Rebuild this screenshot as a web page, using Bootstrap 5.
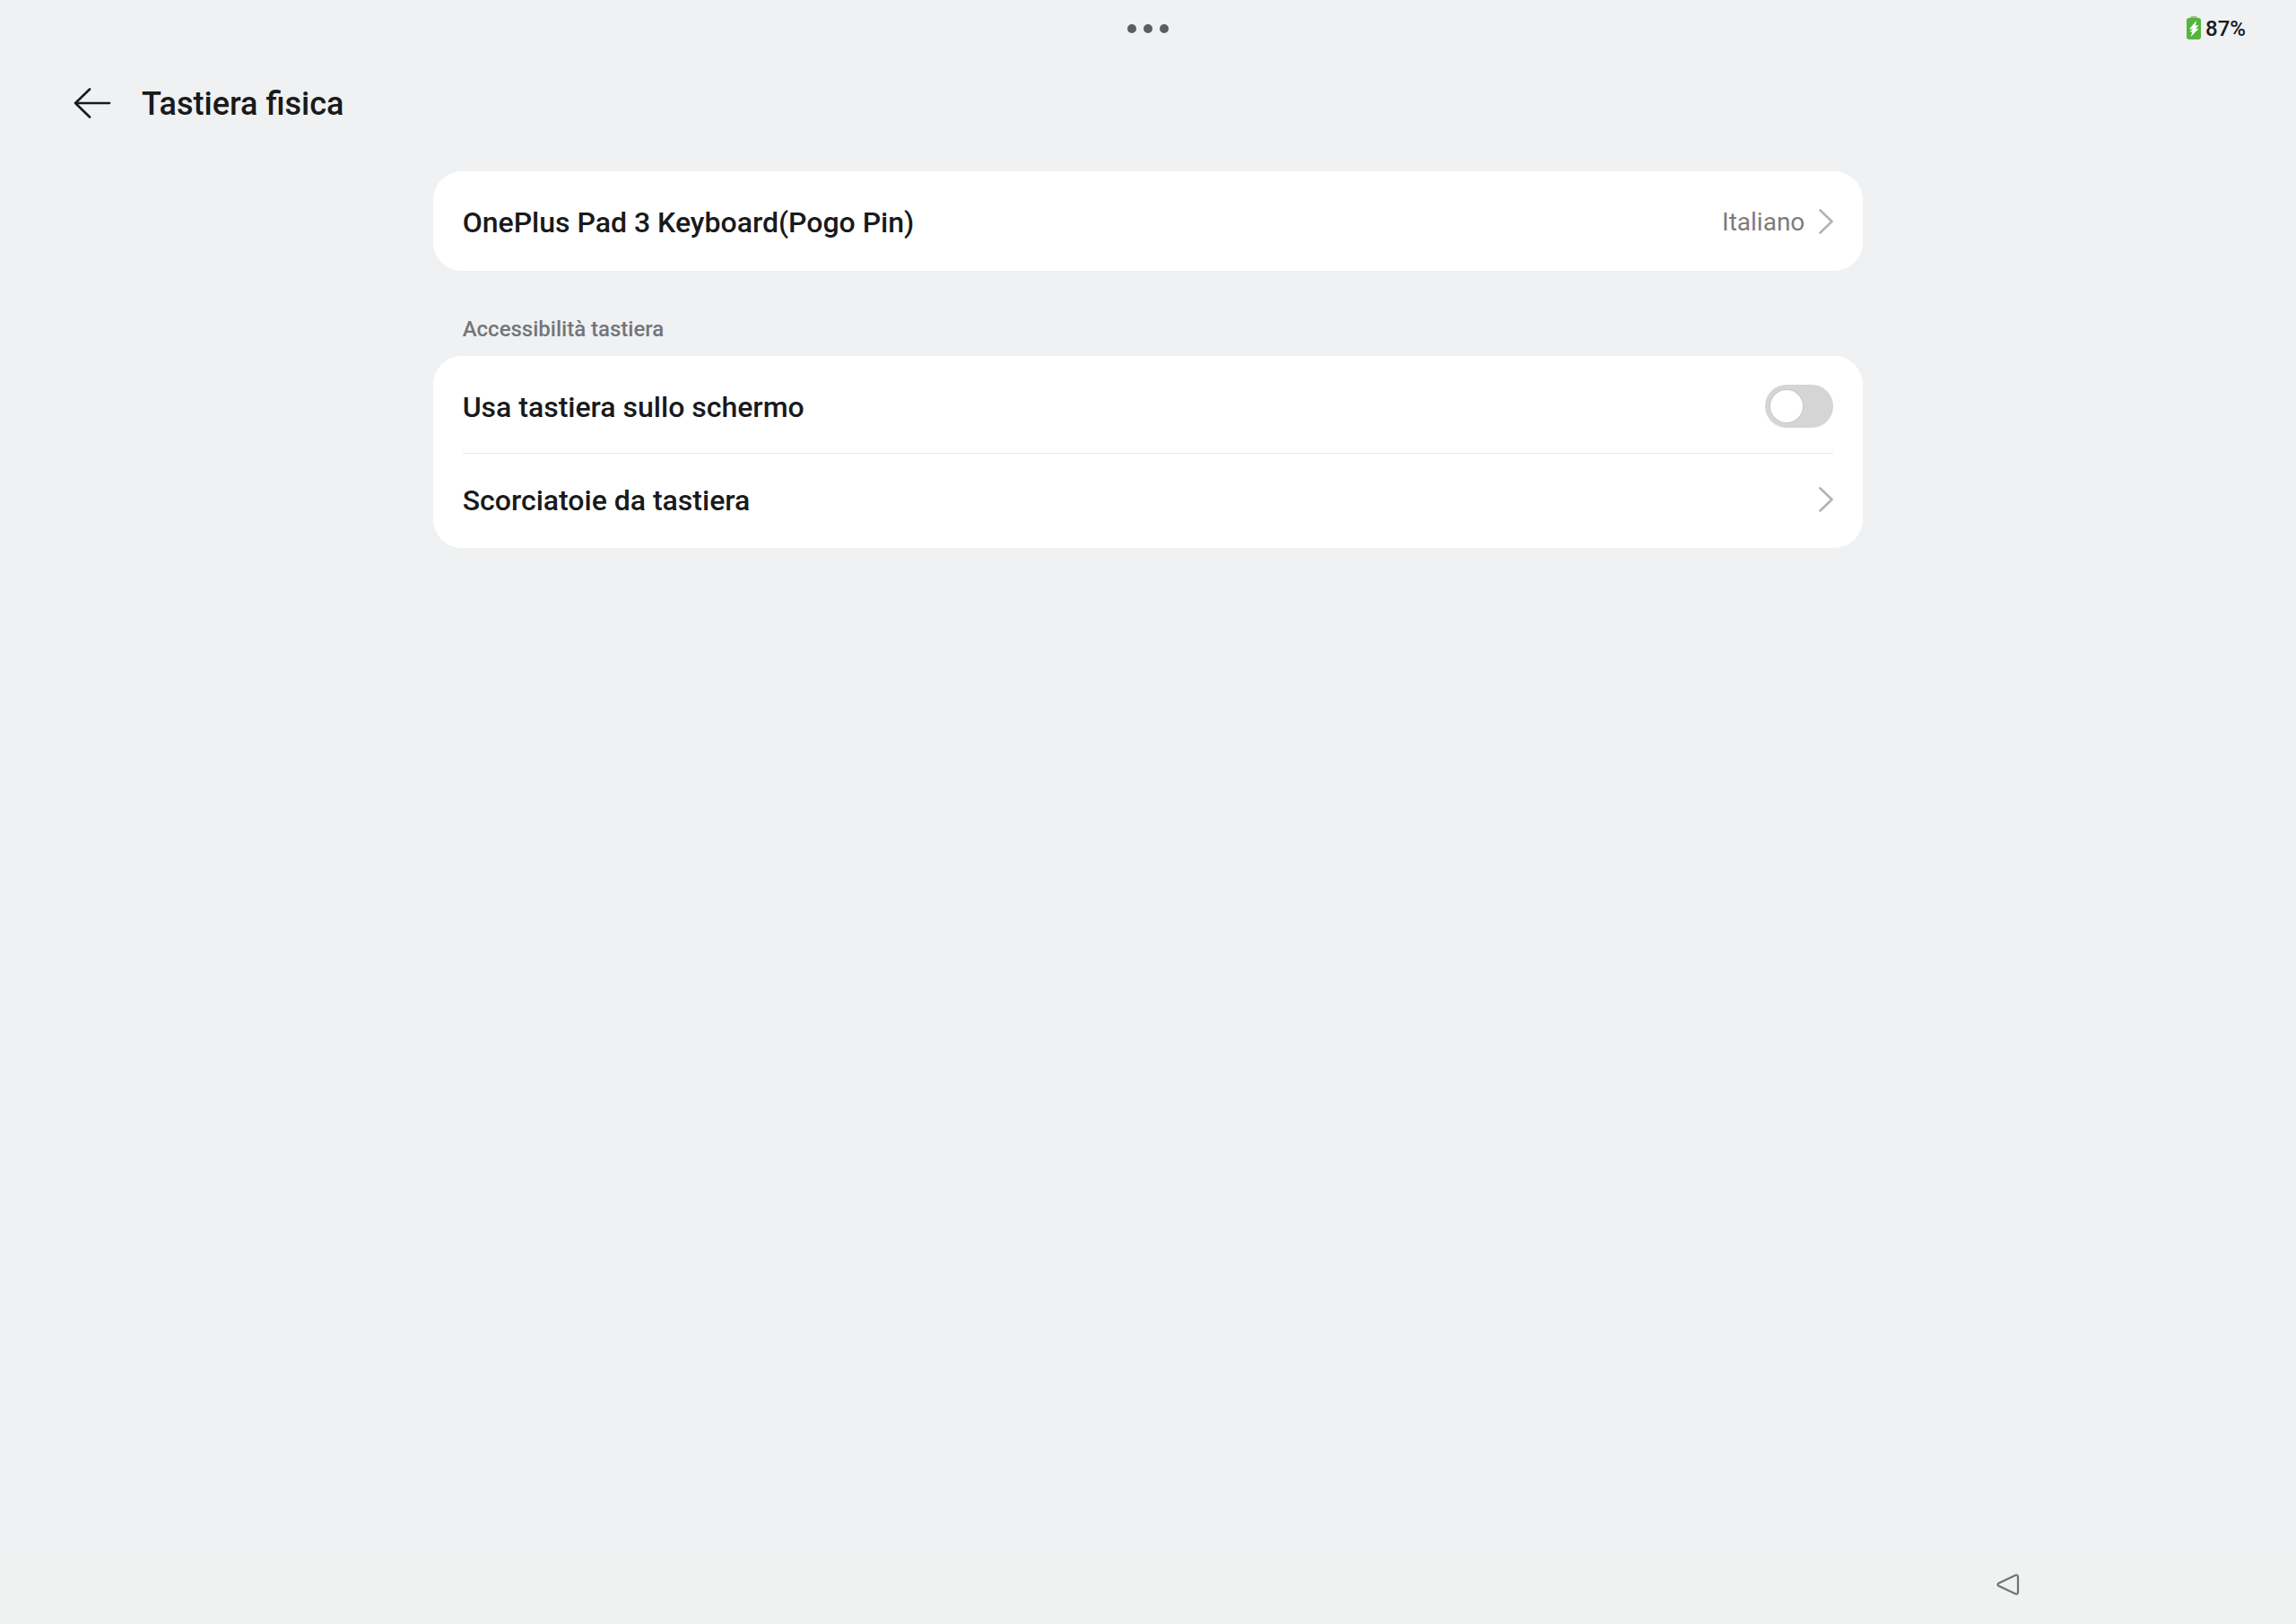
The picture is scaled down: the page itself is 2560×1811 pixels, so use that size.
<!DOCTYPE html>
<html lang="it">
<head>
<meta charset="utf-8">
<meta name="viewport" content="width=device-width, initial-scale=1">
<title>Tastiera fisica</title>
<link href="https://cdn.jsdelivr.net/npm/bootstrap@5.3.0/dist/css/bootstrap.min.css" rel="stylesheet">
<style>
  body { background: #eff1f3; color: #191a1b; font-family: Roboto, "Noto Sans", sans-serif; }
  .status-bar { height: 64px; padding: 0 56px; font-size: 24px; line-height: 32px; }
  .status-level { font-weight: 500; }
  .top-bar { height: 104px; padding: 0 80px; gap: 32px; }
  .top-bar h1 { font-size: 36px; line-height: 48px; font-weight: 480; }
  .settings-col { padding: 23px 56px 0; }
  .panel { border-radius: 32px; padding: 0 33px; }
  .panel-row { font-size: 32px; line-height: 40px; font-weight: 480; min-height: 104px; padding: 0; color: inherit; gap: 16px; }
  .row-label, .row-value { padding-top: 2px; }
  .panel-single .panel-row { min-height: 111px; }
  .panel-row + .panel-row { min-height: 102px; border-top: 1px solid #e8e8e8 !important; }
  .panel-double { padding-top: 4px; padding-bottom: 4px; }
  .row-value { font-size: 28px; font-weight: 400; color: #7c7c7c; }
  .group-title { font-size: 24px; line-height: 32px; font-weight: 480; color: #747577; margin: 49px 33px 14px; }
  .panel .form-switch { min-height: 0; }
  .panel .form-switch .form-check-input {
    width: 76px; height: 48px; border: 0; background-color: #d5d5d5; background-size: 48px 48px;
    background-position: left center;
    --bs-form-switch-bg: url("data:image/svg+xml,%3csvg xmlns='http://www.w3.org/2000/svg' viewBox='0 0 48 48'%3e%3ccircle cx='24' cy='24' r='19' fill='%23c8c8c8'/%3e%3ccircle cx='24' cy='24' r='18' fill='%23fff'/%3e%3c/svg%3e");
  }
  .panel .form-switch .form-check-input:checked { background-color: #2bae55; background-position: right center; }
  .nav-bar { height: 84px; padding: 0 307px 4px; background: #eff2f1; }
</style>
<script src="https://cdn.jsdelivr.net/npm/bootstrap@5.3.0/dist/js/bootstrap.bundle.min.js"></script>
</head>
<body class="d-flex flex-column min-vh-100">
  <header>
    <div class="status-bar row g-0 align-items-center">
      <div class="col"></div>
      <div class="col-auto">
        <button type="button" class="btn p-0 border-0 d-flex" aria-label="Opzioni finestra">
          <svg width="48" height="12" viewBox="0 0 48 12" fill="#5c5d5e"><circle cx="6" cy="6" r="5"/><circle cx="24" cy="6" r="5"/><circle cx="42" cy="6" r="5"/></svg>
        </button>
      </div>
      <div class="col d-flex justify-content-end align-items-center gap-1">
        <svg width="18" height="28" viewBox="0 0 18 28" aria-hidden="true">
          <path d="M5 3V2Q5 0 7 0h4q2 0 2 2v1z" fill="#a5b8a0"/>
          <rect x="1" y="2" width="16" height="24" rx="3" fill="#56b53c"/>
          <path d="M12 5 4 14.500h4L4.500 17.500h3L5.500 23 14.500 14H11l3.500-3.500H11z" fill="#fff"/>
        </svg>
        <span class="status-level">87%</span>
      </div>
    </div>
    <div class="top-bar d-flex align-items-center">
      <a href="#" class="d-flex" aria-label="Indietro">
        <svg width="46" height="36" viewBox="0 0 46 36" fill="none" stroke="#191a1b" stroke-width="2.600" stroke-linecap="round" stroke-linejoin="round"><path d="M20 1.500 4 17l16 15.500M4 17h38"/></svg>
      </a>
      <h1 class="m-0">Tastiera fisica</h1>
    </div>
  </header>

  <main class="row g-0 justify-content-center flex-grow-1 align-content-start">
    <div class="col-12 col-lg-8 settings-col">
      <div class="panel panel-single bg-white list-group">
        <a href="#" class="panel-row list-group-item border-0 bg-transparent d-flex align-items-center">
          <span class="row-label me-auto">OnePlus Pad 3 Keyboard(Pogo Pin)</span>
          <span class="row-value">Italiano</span>
          <svg width="16" height="28" viewBox="0 0 16 28" fill="none" stroke="#b3b3b3" stroke-width="2.600" stroke-linecap="round" stroke-linejoin="round"><path d="M1.500 1.500 14.500 14 1.500 26.500"/></svg>
        </a>
      </div>
      <h2 class="group-title">Accessibilità tastiera</h2>
      <div class="panel panel-double bg-white list-group">
        <div class="panel-row list-group-item border-0 bg-transparent d-flex align-items-center">
          <label class="row-label me-auto" for="osk">Usa tastiera sullo schermo</label>
          <div class="form-check form-switch m-0 p-0 d-flex">
            <input class="form-check-input m-0 float-none" type="checkbox" role="switch" id="osk">
          </div>
        </div>
        <a href="#" class="panel-row list-group-item border-0 bg-transparent d-flex align-items-center">
          <span class="row-label me-auto">Scorciatoie da tastiera</span>
          <svg width="16" height="28" viewBox="0 0 16 28" fill="none" stroke="#b3b3b3" stroke-width="2.600" stroke-linecap="round" stroke-linejoin="round"><path d="M1.500 1.500 14.500 14 1.500 26.500"/></svg>
        </a>
      </div>
    </div>
  </main>

  <footer class="nav-bar d-flex align-items-center justify-content-end">
    <button type="button" class="btn p-0 border-0 d-flex" aria-label="Indietro">
      <svg width="28" height="26" viewBox="0 0 28 26" fill="none" stroke="#727373" stroke-width="2.200" stroke-linejoin="round"><path d="M22.500 2.500 3.500 11.500q-2.200 1.500 0 3l19 9q2.500.5 2.500-2V4.500q0-2.500-2.500-2z"/></svg>
    </button>
  </footer>
</body>
</html>
